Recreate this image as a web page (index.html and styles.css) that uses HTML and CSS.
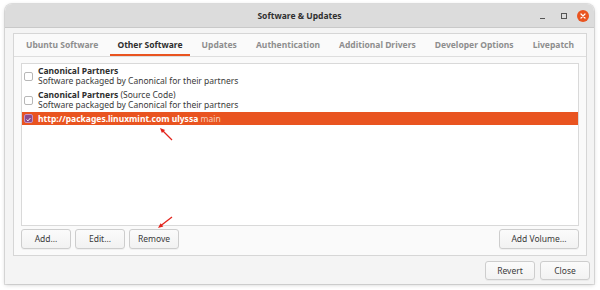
FILE: index.html
```html
<!DOCTYPE html>
<html>
<head>
<meta charset="utf-8">
<link rel="stylesheet" href="styles.css">
</head>
<body>
<div class="window">
  <div class="titlebar">
    <div class="title">Software &amp; Updates</div>
    <div class="controls">
      <span class="min"></span>
      <span class="max"></span>
      <span class="close"><svg width="12" height="12" viewBox="0 0 12 12"><path d="M4 4 L8 8 M8 4 L4 8" stroke="#fff" stroke-width="1.2" stroke-linecap="round"/></svg></span>
    </div>
  </div>
  <div class="body">
    <div class="frame">
      <div class="tabs">
        <div class="tab">Ubuntu Software</div>
        <div class="tab active">Other Software</div>
        <div class="tab">Updates</div>
        <div class="tab">Authentication</div>
        <div class="tab">Additional Drivers</div>
        <div class="tab">Developer Options</div>
        <div class="tab">Livepatch</div>
      </div>
      <div class="page">
        <div class="list">
          <div class="row">
            <span class="cb"></span>
            <div class="txt">
              <div><b>Canonical Partners</b></div>
              <div>Software packaged by Canonical for their partners</div>
            </div>
          </div>
          <div class="row">
            <span class="cb"></span>
            <div class="txt">
              <div><b>Canonical Partners</b> (Source Code)</div>
              <div>Software packaged by Canonical for their partners</div>
            </div>
          </div>
          <div class="row sel">
            <span class="cb"><svg width="9" height="9" viewBox="0 0 9 9"><path d="M2 4.6 L3.8 6.3 L7 2.6" fill="none" stroke="#fff" stroke-width="1.2"/></svg></span>
            <div class="txt"><b>http://packages.linuxmint.com ulyssa</b> <span class="comp">main</span></div>
          </div>
        </div>
        <div class="btnrow">
          <button class="btn">Add...</button>
          <button class="btn">Edit...</button>
          <button class="btn">Remove</button>
          <span class="spacer"></span>
          <button class="btn wide">Add Volume...</button>
        </div>
      </div>
    </div>
    <div class="actions">
      <button class="btn">Revert</button>
      <button class="btn">Close</button>
    </div>
  </div>
</div>
<svg class="arrows" width="600" height="290" viewBox="0 0 600 290">
  <g stroke="#e3241c" stroke-width="1.3" fill="#e3241c">
    <line x1="172" y1="140" x2="163" y2="131"/>
    <polygon points="160,128 165.1,129.9 161.9,133.1" stroke="none"/>
    <line x1="172" y1="217" x2="161" y2="225.5"/>
    <polygon points="158,228 163.3,226.6 160.6,223.2" stroke="none"/>
  </g>
</svg>
</body>
</html>
```
FILE: styles.css
```css
* { box-sizing: border-box; }
html, body { margin: 0; padding: 0; background: #fff; }
body {
  font-family: "Noto Sans", "Open Sans", sans-serif;
  font-size: 8.5px;
  line-height: 10px;
  color: #3a3a3a;
  position: relative;
  width: 600px;
  height: 290px;
  overflow: hidden;
}
.window {
  margin: 4px 0 0 5px;
  width: 589px;
  height: 280px;
  border-radius: 7px 7px 0 0;
  box-shadow: 0 0 0 1px rgba(0,0,0,0.10), 0 1px 4px rgba(0,0,0,0.18);
  display: flex;
  flex-direction: column;
  overflow: hidden;
}
.titlebar {
  height: 24px;
  background: #dcdcdc;
  border-bottom: 1px solid #c9c9c9;
  display: grid;
  grid-template-columns: 1fr auto 1fr;
  align-items: center;
}
.title {
  grid-column: 2;
  font-weight: bold;
  color: #303030;
  padding-top: 1px;
}
.controls {
  grid-column: 3;
  justify-self: end;
  display: flex;
  align-items: center;
  padding-right: 5px;
}
.min {
  width: 5px;
  height: 1px;
  background: #555;
  margin-top: 5px;
  margin-right: 16px;
}
.max {
  width: 6px;
  height: 6px;
  border: 1px solid #555;
  margin-right: 10px;
}
.close {
  width: 12px;
  height: 12px;
  border-radius: 50%;
  background: #e95420;
  display: flex;
}
.body {
  flex: 1;
  background: #f4f4f4;
  padding: 5px 4px 4px 8px;
  display: flex;
  flex-direction: column;
}
.frame {
  margin-right: 3px;
  border: 1px solid #d6d6d6;
  background: #fafafa;
  display: flex;
  flex-direction: column;
}
.tabs {
  height: 23px;
  border-bottom: 1px solid #dedede;
  display: flex;
  justify-content: space-between;
  padding: 0 5px;
}
.tab {
  padding: 0 7px;
  display: flex;
  align-items: center;
  font-weight: bold;
  color: #8e8e8e;
}
.tab.active {
  color: #2e2e2e;
  box-shadow: inset 0 -2px 0 #e95420;
}
.page {
  padding: 6px 7px 6px 7px;
  display: flex;
  flex-direction: column;
}
.list {
  height: 163px;
  border: 1px solid #d9d9d9;
  background: #fff;
  padding-top: 0;
}
.row {
  display: flex;
  align-items: center;
  padding: 2px 0 2px 2px;
  color: #3a3a3a;
}
.row b { color: #2e2e2e; }
.cb {
  width: 9px;
  height: 9px;
  border: 1px solid #b7b7b7;
  border-radius: 2px;
  background: #fff;
  margin-right: 5px;
  flex: none;
  display: flex;
}
.row.sel {
  background: #e95420;
  color: #fff;
  padding: 1px 0 1px 2px;
  line-height: 11px;
}
.row.sel b { color: #fff; }
.row.sel .cb {
  background: #8c4b8c;
  border-color: #c691c0;
}
.comp { color: #f6cfbe; }
.btnrow {
  margin-top: 3px;
  display: flex;
  gap: 4px;
}
.spacer { flex: 1; }
.btn {
  font: inherit;
  color: #3a3a3a;
  width: 50px;
  height: 20px;
  padding: 0;
  border: 1px solid #cdcdcd;
  border-radius: 3px;
  background: linear-gradient(#fbfbfb, #f2f2f2);
  box-shadow: 0 1px 0 rgba(0,0,0,0.04);
}
.btn.wide { width: 80px; }
.actions {
  margin-top: 5px;
  display: flex;
  justify-content: flex-end;
  gap: 5px;
}
.actions .btn { height: 19px; }
.arrows {
  position: absolute;
  left: 0;
  top: 0;
  pointer-events: none;
}
```
